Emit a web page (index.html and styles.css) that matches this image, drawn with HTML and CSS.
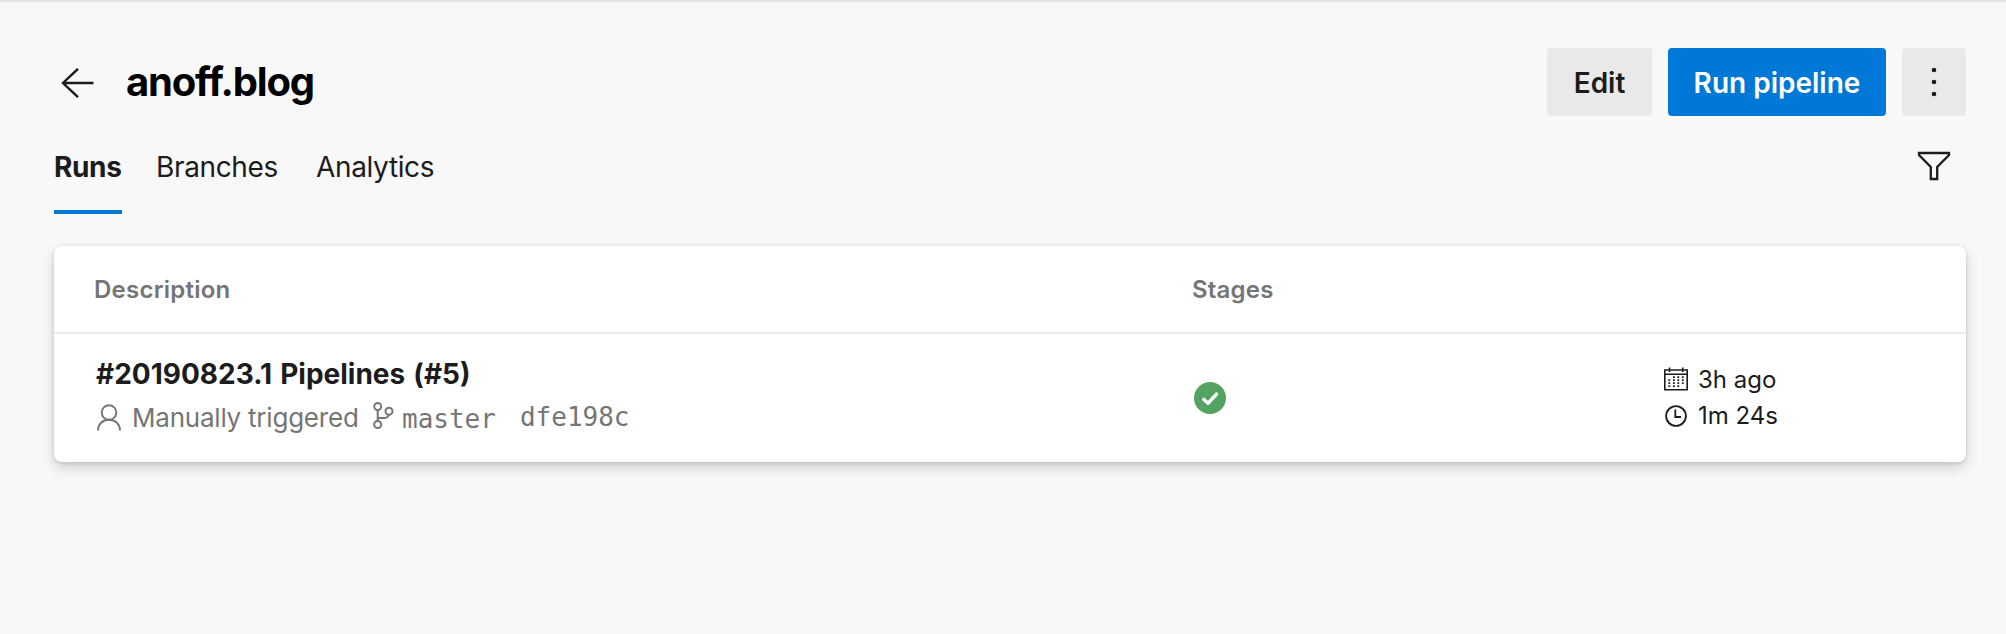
FILE: index.html
```html
<!DOCTYPE html>
<html lang="en">
<head>
<meta charset="utf-8">
<title>anoff.blog - Pipelines</title>
<link rel="stylesheet" href="styles.css">
</head>
<body>
<div class="page">
  <header class="header">
    <svg class="back" width="33" height="30" viewBox="0 0 33 30" fill="none" stroke="#1c1c1c" stroke-width="2.400"><path d="M32.500 15H2M17 .8 2 15 17 29.200"/></svg>
    <h1 class="title">anoff.blog</h1>
    <div class="actions">
      <button class="btn btn-edit">Edit</button>
      <button class="btn btn-run">Run pipeline</button>
      <button class="btn btn-more" aria-label="More actions"><svg width="6" height="30" viewBox="0 0 6 30" fill="#1c1c1c"><circle cx="3" cy="3" r="2.3"/><circle cx="3" cy="15" r="2.3"/><circle cx="3" cy="27" r="2.3"/></svg></button>
    </div>
  </header>
  <nav class="tabs">
    <a class="tab tab-active">Runs</a>
    <a class="tab tab-branches">Branches</a>
    <a class="tab tab-analytics">Analytics</a>
    <svg class="filter" width="34" height="30" viewBox="0 0 34 30" fill="none" stroke="#1c1c1c" stroke-width="2.300"><path d="M2 2H32V4L20.2 16V28H13.8V16L2 4Z"/></svg>
  </nav>
  <main class="card">
    <div class="row head">
      <div class="description">Description</div>
      <div class="stages">Stages</div>
    </div>
    <div class="row run">
      <div>
        <div class="run-title">#20190823.1 Pipelines (#5)</div>
        <div class="meta">
          <svg class="person" width="24" height="27" viewBox="0 0 24 27" fill="none" stroke="#757575" stroke-width="1.900"><circle cx="12" cy="8.500" r="7.300"/><path d="M1 26.500C1 20 5.500 15.800 12 15.800S23 20 23 26.500"/></svg>
          <span class="trigger">Manually triggered</span>
          <svg class="branch" width="21" height="27" viewBox="0 0 21 27" fill="none" stroke="#757575" stroke-width="2"><circle cx="4.700" cy="4.500" r="3.500"/><circle cx="16" cy="9.300" r="3.500"/><circle cx="4.700" cy="22.500" r="3.500"/><path d="M4.700 8V19M4.700 16H11Q15 16 15.500 12.800"/></svg>
          <span class="mono branch-name">master</span>
          <span class="mono commit">dfe198c</span>
        </div>
      </div>
      <div>
        <svg class="status" width="32" height="32" viewBox="0 0 32 32"><circle cx="16" cy="16" r="16" fill="#55a362"/><path d="M9.700 17.300 14 21.300 22.600 12" fill="none" stroke="#fff" stroke-width="3.400" stroke-linecap="round" stroke-linejoin="round"/></svg>
      </div>
      <div class="times">
        <div class="time"><svg width="24" height="24" viewBox="0 0 24 24" fill="none" stroke="#1c1c1c"><path stroke-width="1.600" d="M.800 3H23.200V22.700H.800ZM.800 7.300H23.200M5.500 .500V5M18.700 .500V5"/><path stroke-width="1.800" stroke-dasharray="1.700 1.300" d="M5.300 12.300V20M9.900 9.300V20M14.300 9.300V20M18.800 9.300V17.500"/></svg><span>3h ago</span></div>
        <div class="time"><svg width="24" height="24" viewBox="0 0 24 24" fill="none" stroke="#1c1c1c" stroke-width="1.800"><circle cx="12" cy="13" r="9.900"/><path d="M11.300 6.500V14H17"/></svg><span>1m 24s</span></div>
      </div>
    </div>
  </main>
</div>
</body>
</html>
```
FILE: styles.css
```css
* { box-sizing: border-box; }
body {
  margin: 0;
  background: #f8f8f8;
  color: #1c1c1c;
  font-family: Inter, "Liberation Sans", sans-serif;
}
.page {
  height: 634px;
  padding: 46px 40px 0 54px;
  border-top: 2px solid #e4e4e4;
  overflow: hidden;
}
.header { display: flex; align-items: center; height: 68px; }
.back { margin: 1px 0 0 7px; }
.title {
  margin: 0 0 0 32px;
  color: #000;
  font-size: 40px;
  line-height: 48px;
  font-weight: 700;
  letter-spacing: -1.2px;
}
.actions { display: flex; gap: 16px; margin-left: auto; }
.btn {
  display: flex;
  align-items: center;
  justify-content: center;
  height: 68px;
  padding: 2px 0 0;
  border: 0;
  border-radius: 4px;
  background: #e9e9e9;
  color: #1c1c1c;
  font: 600 28px/36px Inter, "Liberation Sans", sans-serif;
}
.btn-edit { width: 105px; }
.btn-run { width: 218px; background: #0078d7; color: #fff; }
.btn-more { width: 64px; padding-top: 0; }
.tabs { display: flex; height: 98px; padding-top: 16px; font-size: 28px; line-height: 70px; letter-spacing: -.35px; }
.tab { height: 82px; white-space: nowrap; }
.tab-active { width: 68px; border-bottom: 4px solid #0078d7; font-weight: 700; }
.tab-branches { margin-left: 34px; }
.tab-analytics { width: 118px; margin-left: 38px; }
.filter { margin: 19px 15px 0 auto; }
.card {
  height: 216px;
  margin-top: 32px;
  border-radius: 8px;
  background: #fff;
  box-shadow: 0 6px 14px rgba(0, 0, 0, .16), 0 1px 4px rgba(0, 0, 0, .13);
}
.row { display: grid; grid-template-columns: 1100px 470px 1fr; padding-left: 40px; }
.head {
  height: 88px;
  border-bottom: 2px solid #eaeaea;
  color: #757575;
  font-size: 24px;
  line-height: 88px;
  font-weight: 600;
}
.description { letter-spacing: .25px; }
.stages { margin-left: -2px; letter-spacing: .2px; }
.run { height: 128px; }
.run-title { margin: 23px 0 0 2px; font-size: 28px; line-height: 34px; font-weight: 700; word-spacing: 1.5px; white-space: nowrap; }
.meta { display: flex; height: 36px; margin-top: 11px; color: #757575; font-size: 26px; line-height: 32px; white-space: nowrap; }
.person { margin: 2px 11px 0 3px; }
.trigger { width: 227px; letter-spacing: -.22px; }
.branch { margin: 0 0 0 14px; }
.mono { font-family: "DejaVu Sans Mono", monospace; }
.branch-name { margin: 1px 0 0 8px; }
.commit { margin: -1px 0 0 24px; }
.status { display: block; margin-top: 48px; }
.times { padding-top: 28px; }
.time { display: flex; align-items: center; gap: 10px; height: 36px; font-size: 24px; line-height: 36px; white-space: nowrap; }
.time svg { margin-top: -2px; }
```
